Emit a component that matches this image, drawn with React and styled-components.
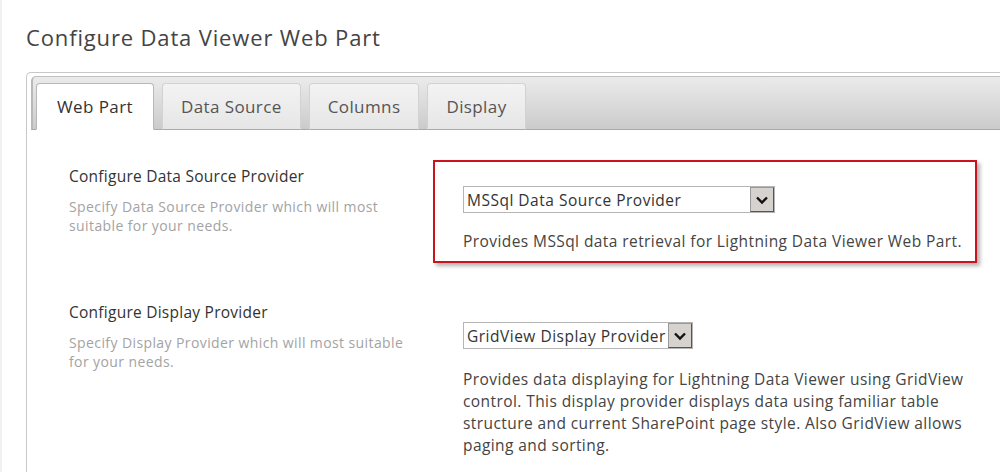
import React from 'react'
import styled, { createGlobalStyle } from 'styled-components'

const GlobalStyle = createGlobalStyle`
    html, body {
        margin: 0;
        padding: 0;
        background: #fff;
        overflow: hidden;
    }
    body {
        font-family: "Open Sans", "Noto Sans", sans-serif;
        color: #444;
    }
`

const tabs = ['Web Part', 'Data Source', 'Columns', 'Display']

function Dropdown({ value, width }) {
    return (
        <SelectBox $width={width}>
            <SelectText>{value}</SelectText>
            <ArrowButton>
                <svg width="14" height="10" viewBox="0 0 14 10">
                    <path d="M2 2.5 L7 7.5 L12 2.5" fill="none" stroke="#111" strokeWidth="2.4" />
                </svg>
            </ArrowButton>
        </SelectBox>
    )
}

export default function App() {
    return (
        <Page>
            <GlobalStyle />
            <Title>Configure Data Viewer Web Part</Title>
            <Panel>
                <TabStrip>
                    {tabs.map((t, i) => <Tab key={t} $active={i === 0}>{t}</Tab>)}
                </TabStrip>
                <Body>
                    <Row>
                        <Label $top={6}>
                            <LabelTitle>Configure Data Source Provider</LabelTitle>
                            <LabelHint>Specify Data Source Provider which will most suitable for your needs.</LabelHint>
                        </Label>
                        <Highlight>
                            <Dropdown value="MSSql Data Source Provider" width="312px" />
                            <Description $top={17}>Provides MSSql data retrieval for Lightning Data Viewer Web Part.</Description>
                        </Highlight>
                    </Row>
                    <Row>
                        <Label $top={0}>
                            <LabelTitle>Configure Display Provider</LabelTitle>
                            <LabelHint>Specify Display Provider which will most suitable for your needs.</LabelHint>
                        </Label>
                        <Field>
                            <Dropdown value="GridView Display Provider" />
                            <Description $top={19}>
                                Provides data displaying for Lightning Data Viewer using GridView control. This display provider displays data using familiar table structure and current SharePoint page style. Also GridView allows paging and sorting.
                            </Description>
                        </Field>
                    </Row>
                </Body>
            </Panel>
        </Page>
    )
}

const Page = styled.div`
    height: 472px;
    overflow: hidden;
    border-left: 2px solid #f1f1f1;
    padding-left: 24px;
`

const Title = styled.h1`
    margin: 0;
    padding-top: 22px;
    font-size: 22px;
    letter-spacing: 0.85px;
    line-height: 30px;
    font-weight: 400;
    color: #444;
`

const Panel = styled.div`
    margin-top: 20px;
    width: 1100px;
    border: 1px solid #c8c8c8;
    border-right: none;
    border-bottom: none;
    border-radius: 5px 0 0 0;
    padding: 3px 0 0 4px;
    min-height: 420px;
`

const TabStrip = styled.div`
    height: 52px;
    display: flex;
    align-items: flex-end;
    gap: 8px;
    padding-left: 3px;
    background: linear-gradient(#ebebeb, #d8d8d8 60%, #cbcbcb);
    border-top: 1px solid #c0c0c0;
    border-left: 2px solid #b9b9b9;
    border-bottom: 1px solid #a9a9a9;
    border-radius: 5px 0 0 0;
`

const Tab = styled.div`
    height: 45px;
    margin-bottom: -1px;
    padding: 0 ${p => p.$active ? 20 : 18}px;
    display: flex;
    align-items: center;
    font-size: 17px;
    letter-spacing: 0.4px;
    color: ${p => p.$active ? '#333' : '#555'};
    background: ${p => p.$active ? '#fff' : 'linear-gradient(#f3f3f3, #e6e6e6)'};
    border: 1px solid ${p => p.$active ? '#b8b8b8' : '#d2d2d2'};
    border-bottom: ${p => p.$active ? '1px solid #fff' : '1px solid #a9a9a9'};
    border-radius: 4px 4px 0 0;
`

const Body = styled.div`
    padding: 30px 0 0 0;
    display: flex;
    flex-direction: column;
    gap: 39px;
`

const Row = styled.div`
    display: grid;
    grid-template-columns: 402px 544px;
    align-items: start;
`

const Label = styled.div`
    padding: ${p => p.$top}px 0 0 38px;
`

const LabelTitle = styled.div`
    font-size: 15.5px;
    letter-spacing: 0.25px;
    line-height: 20px;
    color: #333;
`

const LabelHint = styled.div`
    margin-top: 11px;
    width: 345px;
    font-size: 14px;
    letter-spacing: 0.4px;
    line-height: 19px;
    color: #a3a3a3;
`

const Highlight = styled.div`
    border: 2px solid #c8151b;
    padding: 24px 0 9px 28px;
    box-shadow: 3px 3px 4px rgba(0, 0, 0, 0.3);
`

const Field = styled.div`
    padding: 20px 0 0 30px;
`

const SelectBox = styled.div`
    display: inline-flex;
    align-items: center;
    box-sizing: border-box;
    width: ${p => p.$width || 'auto'};
    height: 27px;
    border: 1px solid #b5b5b5;
    background: #fff;
`

const SelectText = styled.span`
    flex: 1;
    padding: 0 2px 0 3px;
    font-size: 15.5px;
    letter-spacing: 0.5px;
    color: #333;
    white-space: nowrap;
`

const ArrowButton = styled.span`
    box-sizing: border-box;
    width: 24px;
    height: 25px;
    display: flex;
    align-items: center;
    justify-content: center;
    background: #d6d3ce;
    border: 1px solid #777;
    border-color: #999 #555 #555 #999;
`

const Description = styled.p`
    margin: ${p => p.$top}px 0 0;
    max-width: 512px;
    font-size: 15.5px;
    letter-spacing: 0.42px;
    line-height: 22px;
    color: #444;
`
